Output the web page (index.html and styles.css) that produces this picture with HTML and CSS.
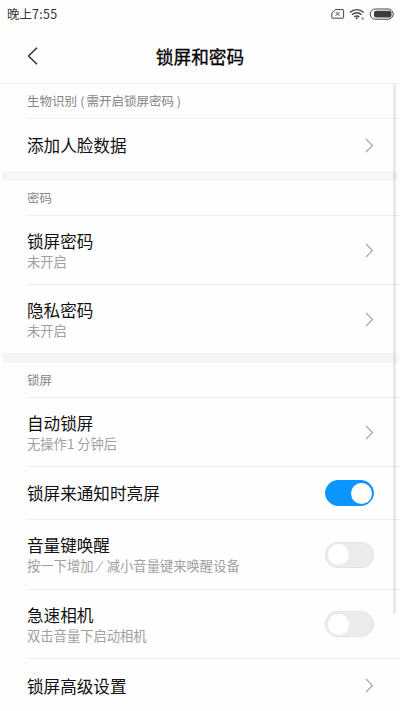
FILE: index.html
```html
<!DOCTYPE html>
<html lang="zh-CN">
<head>
<meta charset="utf-8">
<title>锁屏和密码</title>
<link rel="stylesheet" href="styles.css">
</head>
<body>
<div class="status">
  <span class="time">晚上<span class="digits">7:55</span></span>
  <svg class="status-icons" width="64" height="14" viewBox="0 0 64 14" fill="none" stroke="#444">
    <path d="M4.2 2.6H12a.6.6 0 0 1 .6.6v7.4a.6.6 0 0 1-.6.6H1.4a.6.6 0 0 1-.6-.6V6z"/>
    <path d="M4.6 4.9l4 4M8.6 4.9l-4 4"/>
    <path d="M18.900 5.400c4-3.700 9.800-3.700 13.800 0M21.100 7.800c2.900-2.600 6.500-2.600 9.400 0M23.300 10c1.600-1.400 3.400-1.400 5 0" stroke-width="1.4"/>
    <circle cx="25.800" cy="11.300" r="1" fill="#444" stroke="none"/>
    <circle cx="31.700" cy="11.600" r="1.300" fill="#999" stroke="none"/>
    <rect x="39.200" y="2" width="23" height="10.200" rx="5.100"/>
    <rect x="43" y="3.800" width="17.500" height="6.600" rx="2" fill="#3c3c3c" stroke="none"/>
  </svg>
</div>
<header class="header">
  <svg class="back" width="12" height="20" viewBox="0 0 12 20" fill="none" stroke="#222" stroke-width="1.300"><path d="M10 1.700 1.500 10 10 18.300"/></svg>
  <h1>锁屏和密码</h1>
</header>
<main class="list">
  <section>
    <h2>生物识别<span class="paren open">(</span>需开启锁屏密码<span class="paren">)</span></h2>
    <div class="row face"><div class="name">添加人脸数据</div><svg class="arrow" viewBox="0 0 9 15"><path d="M1 1l6.500 6.500L1 14"/></svg></div>
  </section>
  <section>
    <h2>密码</h2>
    <div class="row tall"><div><div class="name">锁屏密码</div><div class="note">未开启</div></div><svg class="arrow" viewBox="0 0 9 15"><path d="M1 1l6.500 6.500L1 14"/></svg></div>
    <div class="row tall end"><div><div class="name">隐私密码</div><div class="note">未开启</div></div><svg class="arrow" viewBox="0 0 9 15"><path d="M1 1l6.500 6.500L1 14"/></svg></div>
  </section>
  <section>
    <h2>锁屏</h2>
    <div class="row tall"><div><div class="name">自动锁屏</div><div class="note">无操作1 分钟后</div></div><svg class="arrow" viewBox="0 0 9 15"><path d="M1 1l6.500 6.500L1 14"/></svg></div>
    <div class="row"><div class="name">锁屏来通知时亮屏</div><span class="switch on"></span></div>
    <div class="row taller"><div><div class="name">音量键唤醒</div><div class="note">按一下增加<span class="slash">/</span>减小音量键来唤醒设备</div></div><span class="switch"></span></div>
    <div class="row tall"><div><div class="name">急速相机</div><div class="note">双击音量下启动相机</div></div><span class="switch"></span></div>
    <div class="row"><div class="name">锁屏高级设置</div><svg class="arrow" viewBox="0 0 9 15"><path d="M1 1l6.500 6.500L1 14"/></svg></div>
  </section>
  <div class="scrollbar"></div>
</main>
</body>
</html>
```

FILE: styles.css
```css
* { box-sizing: border-box; }
body {
  margin: 0;
  width: 400px;
  height: 711px;
  overflow: hidden;
  background: #fefefe;
  color: #111;
  font-family: "Noto Sans CJK SC", sans-serif;
}
.status {
  height: 28px;
  padding: 0 5px 0 7px;
  display: flex;
  align-items: center;
  justify-content: space-between;
}
.time { font-size: 12.5px; line-height: 28px; color: #333; }
.digits { letter-spacing: .3px; }
.header {
  height: 56px;
  display: grid;
  grid-template-columns: 60px 1fr 60px;
  align-items: center;
  border-bottom: 1px solid #efefef;
}
.back { margin-left: 27px; }
h1 {
  margin: 0;
  font-size: 17.7px;
  line-height: 26px;
  font-weight: 400;
  -webkit-text-stroke: .3px #000;
  text-align: center;
  color: #000;
}
.list { position: relative; }
section + section::before {
  content: "";
  display: block;
  height: 10px;
  margin: 0 1px 0 2px;
  background: #f6f6f6;
}
h2 {
  margin: 0 0 0 27px;
  height: 35px;
  line-height: 34px;
  font-size: 12.5px;
  font-weight: 400;
  color: #858585;
  border-bottom: 1px solid #eee;
}
.paren { display: inline-block; width: 9.5px; text-align: center; }
.open { padding-left: 1px; }
.row {
  margin-left: 27px;
  padding-right: 26px;
  height: 53px;
  display: flex;
  align-items: center;
  justify-content: space-between;
  border-bottom: 1px solid #eee;
}
.row:last-child { border-bottom: 0; }
.face { height: 52px; }
.tall { height: 69px; }
.taller { height: 70px; }
.end { height: 68px; }
.name { font-size: 16.6px; line-height: 22px; }
.note { font-size: 13.3px; line-height: 19px; color: #a0a0a0; }
.slash { display: inline-block; width: 13.3px; text-align: center; transform: skewX(-18deg) scaleY(.8); }
.arrow {
  width: 9px;
  height: 15px;
  fill: none;
  stroke: #a3a3a3;
  stroke-width: 1.1;
}
.switch {
  width: 49px;
  height: 26px;
  padding: 1px 1.5px;
  border: 1px solid #e2e2e2;
  border-radius: 13px;
  background: #ececec;
  display: flex;
  align-items: center;
}
.switch::before {
  content: "";
  width: 21px;
  height: 21px;
  border-radius: 50%;
  background: #fff;
}
.on { background: #0b95ff; border-color: #0b95ff; justify-content: flex-end; }
.scrollbar {
  position: absolute;
  top: 0;
  left: 393px;
  width: 3px;
  height: 530px;
  border-radius: 2px;
  background: rgba(0, 0, 0, .08);
}
```
